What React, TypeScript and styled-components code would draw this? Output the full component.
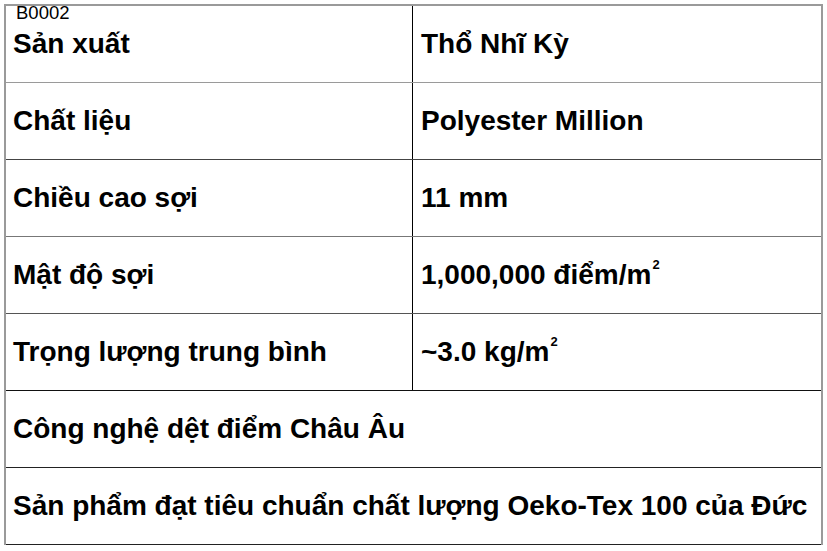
import React from "react";
import styled, { createGlobalStyle } from "styled-components";

const Global = createGlobalStyle`
  html, body { margin: 0; padding: 0; background: #fff; }
  body { font-family: "Liberation Sans", Arial, sans-serif; color: #000; }
`;

const Page = styled.div`
  position: relative;
  padding: 4px 4px 0 4px;
  width: 827px;
  box-sizing: border-box;
`;

const Code = styled.div`
  position: absolute;
  left: 16px;
  top: 4px;
  font-size: 18.5px;
  line-height: 1;
  font-weight: 400;
`;

const Table = styled.div`
  width: 819px;
  box-sizing: border-box;
  border-top: 2px solid #9a9a9a;
  border-left: 2px solid #9a9a9a;
  border-right: 2px solid #9a9a9a;
  display: flex;
  flex-direction: column;
`;

const Row = styled.div<{ $line: string; $full?: boolean }>`
  display: grid;
  grid-template-columns: ${(p) => (p.$full ? "1fr" : "407px 1fr")};
  height: 77px;
  box-sizing: border-box;
  border-bottom: 1px solid ${(p) => p.$line};
`;

const Cell = styled.div<{ $divider?: boolean }>`
  display: flex;
  align-items: center;
  padding: 0 0 0 7px;
  font-size: 28px;
  font-weight: 700;
  white-space: nowrap;
  border-right: ${(p) => (p.$divider ? "1px solid #000" : "none")};
`;

const ValueCell = styled(Cell)`
  padding-left: 8px;
`;

const Sup = styled.span`
  font-size: 13px;
  position: relative;
  top: -11px;
  margin-left: 1px;
`;

type Pair = { k: string; v: React.ReactNode; line: string };

const pairs: Pair[] = [
  { k: "Sản xuất", v: "Thổ Nhĩ Kỳ", line: "#9a9a9a" },
  { k: "Chất liệu", v: "Polyester Million", line: "#444" },
  { k: "Chiều cao sợi", v: "11 mm", line: "#777" },
  {
    k: "Mật độ sợi",
    v: (
      <>
        1,000,000 điểm/m<Sup>2</Sup>
      </>
    ),
    line: "#555",
  },
  {
    k: "Trọng lượng trung bình",
    v: (
      <>
        ~3.0 kg/m<Sup>2</Sup>
      </>
    ),
    line: "#111",
  },
];

const notes = [
  "Công nghệ dệt điểm Châu Âu",
  "Sản phẩm đạt tiêu chuẩn chất lượng Oeko-Tex 100 của Đức",
];

export default function App() {
  return (
    <>
      <Global />
      <Page>
        <Table>
          {pairs.map((p) => (
            <Row key={p.k} $line={p.line}>
              <Cell $divider>{p.k}</Cell>
              <ValueCell>{p.v}</ValueCell>
            </Row>
          ))}
          {notes.map((n) => (
            <Row key={n} $line="#222" $full>
              <Cell>{n}</Cell>
            </Row>
          ))}
        </Table>
        <Code>B0002</Code>
      </Page>
    </>
  );
}
